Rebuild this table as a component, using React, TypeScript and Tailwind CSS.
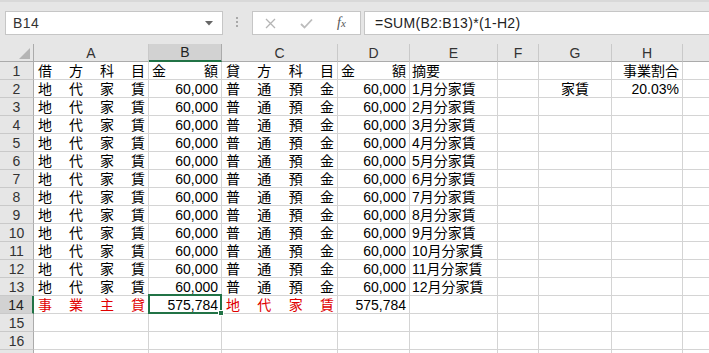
import React from "react";

const cols = ["A", "B", "C", "D", "E", "F", "G", "H", ""];

type Cell = { t?: string; kind?: "dist" | "right" | "left" | "center" | "split"; red?: boolean; sel?: boolean };

function Dist({ text, red }: { text: string; red?: boolean }) {
  return (
    <div className={`flex h-full items-center justify-between pl-[4px] pr-[3px] ${red ? "text-[#e00000]" : "text-black"}`}>
      {text.split("").map((c, i) => (
        <span key={i}>{c}</span>
      ))}
    </div>
  );
}

function renderCell(c: Cell | undefined) {
  if (!c || !c.t) return null;
  if (c.kind === "dist") return <Dist text={c.t} red={c.red} />;
  if (c.kind === "split")
    return (
      <div className="flex h-full items-center justify-between pl-[3px] pr-[3px]">
        <span>金</span>
        <span>額</span>
      </div>
    );
  const align =
    c.kind === "right" ? "justify-end pr-[3px]" : c.kind === "center" ? "justify-center" : "justify-start pl-[2px]";
  return <div className={`flex h-full items-center whitespace-nowrap ${align} ${c.red ? "text-[#e00000]" : ""}`}>{c.t}</div>;
}

export default function App() {
  const rows: Cell[][] = [];
  rows.push([
    { t: "借方科目", kind: "dist" },
    { t: "金額", kind: "split" },
    { t: "貸方科目", kind: "dist" },
    { t: "金額", kind: "split" },
    { t: "摘要", kind: "left" },
    {},
    {},
    { t: "事業割合", kind: "right" },
    {},
  ]);
  for (let i = 1; i <= 12; i++) {
    rows.push([
      { t: "地代家賃", kind: "dist" },
      { t: "60,000", kind: "right" },
      { t: "普通預金", kind: "dist" },
      { t: "60,000", kind: "right" },
      { t: `${i}月分家賃`, kind: "left" },
      {},
      i === 1 ? { t: "家賃", kind: "center" } : {},
      i === 1 ? { t: "20.03%", kind: "right" } : {},
      {},
    ]);
  }
  rows.push([
    { t: "事業主貸", kind: "dist", red: true },
    { t: "575,784", kind: "right", sel: true },
    { t: "地代家賃", kind: "dist", red: true },
    { t: "575,784", kind: "right" },
    {},
    {},
    {},
    {},
    {},
  ]);
  for (let i = 0; i < 3; i++) rows.push([{}, {}, {}, {}, {}, {}, {}, {}, {}]);

  return (
    <div className="w-[709px] h-[353px] overflow-hidden bg-white font-['Liberation_Sans','Noto_Sans_CJK_JP',sans-serif] text-[14px] text-black">
      {/* Formula bar area */}
      <div className="h-[44px] bg-[#e6e6e6] border-t-[2px] border-[#d9d9d9] flex items-start pt-[9px]">
        <div className="ml-[5px] w-[218px] h-[24px] bg-white border border-[#c6c6c6] flex items-center justify-between pl-[7px] pr-[9px]">
          <span className="text-[14px] text-[#333] tracking-[0.5px]">B14</span>
          <svg width="8" height="5" viewBox="0 0 8 5">
            <polygon points="0,0 8,0 4,4.5" fill="#666" />
          </svg>
        </div>
        <div className="ml-[13px] mt-[6px] flex flex-col gap-[2px]">
          <div className="w-[2px] h-[2px] bg-[#a8a8a8]" />
          <div className="w-[2px] h-[2px] bg-[#a8a8a8]" />
          <div className="w-[2px] h-[2px] bg-[#a8a8a8]" />
        </div>
        <div className="ml-[14px] w-[109px] h-[24px] bg-white border border-[#c6c6c6] flex items-center">
          <svg className="ml-[12px]" width="11" height="11" viewBox="0 0 11 11">
            <path d="M1 1 L10 10 M10 1 L1 10" stroke="#b4b4b4" strokeWidth="1.3" />
          </svg>
          <svg className="ml-[24px]" width="13" height="11" viewBox="0 0 13 11">
            <path d="M1 6 L4.5 9.5 L12 1.5" stroke="#bcbcbc" strokeWidth="1.8" fill="none" />
          </svg>
          <span className="ml-[24px] font-['Liberation_Serif',serif] italic text-[14px] text-[#555] leading-none">
            f<span className="text-[11px]">x</span>
          </span>
        </div>
        <div className="ml-[3px] flex-1 h-[24px] bg-white border border-r-0 border-[#c6c6c6] flex items-center pl-[10px]">
          <span className="text-[14px] text-[#222] tracking-[0.3px]">=SUM(B2:B13)*(1-H2)</span>
        </div>
      </div>

      {/* Grid */}
      <div className="grid grid-cols-[34px_115px_73px_116px_72px_88px_41px_73px_71px_26px] auto-rows-[18px] leading-[18px]">
        {/* Header row */}
        <div className="relative bg-[#e6e6e6] border-r border-b border-[#ababab]">
          <svg className="absolute right-[3px] bottom-[2px]" width="11" height="11" viewBox="0 0 11 11">
            <polygon points="11,0 11,11 0,11" fill="#b4b4b4" />
          </svg>
        </div>
        {cols.map((c, i) => (
          <div
            key={i}
            className={`flex items-center justify-center text-[14px] ${
              c === "B"
                ? "bg-[#d2d2d2] border-b-2 border-b-[#217346] border-r border-r-[#ababab] text-[#222]"
                : `bg-[#e6e6e6] border-b border-b-[#ababab] ${i < cols.length - 1 ? "border-r border-r-[#c9c9c9]" : ""} text-[#333]`
            }`}
          >
            {c}
          </div>
        ))}

        {rows.map((r, ri) => (
          <React.Fragment key={ri}>
            <div
              className={`flex items-center justify-center text-[14px] border-b border-b-[#c9c9c9] ${
                ri === 13
                  ? "bg-[#d2d2d2] border-r-2 border-r-[#217346] text-[#222]"
                  : "bg-[#e6e6e6] border-r border-r-[#ababab] text-[#333]"
              }`}
            >
              {ri < 16 ? ri + 1 : ""}
            </div>
            {r.map((c, ci) => (
              <div
                key={ci}
                className={`relative border-b border-[#d4d4d4] ${ci < r.length - 1 ? "border-r" : ""} ${
                  c.sel ? "z-10" : ""
                }`}
              >
                {renderCell(c)}
                {c.sel && (
                  <>
                    <div className="absolute left-[-1px] top-[-2px] right-[-1px] bottom-[-1px] border-2 border-[#217346]" />
                    <div className="absolute right-[-3px] bottom-[-3px] w-[6px] h-[6px] bg-[#217346] border border-white" />
                  </>
                )}
              </div>
            ))}
          </React.Fragment>
        ))}
      </div>
    </div>
  );
}
